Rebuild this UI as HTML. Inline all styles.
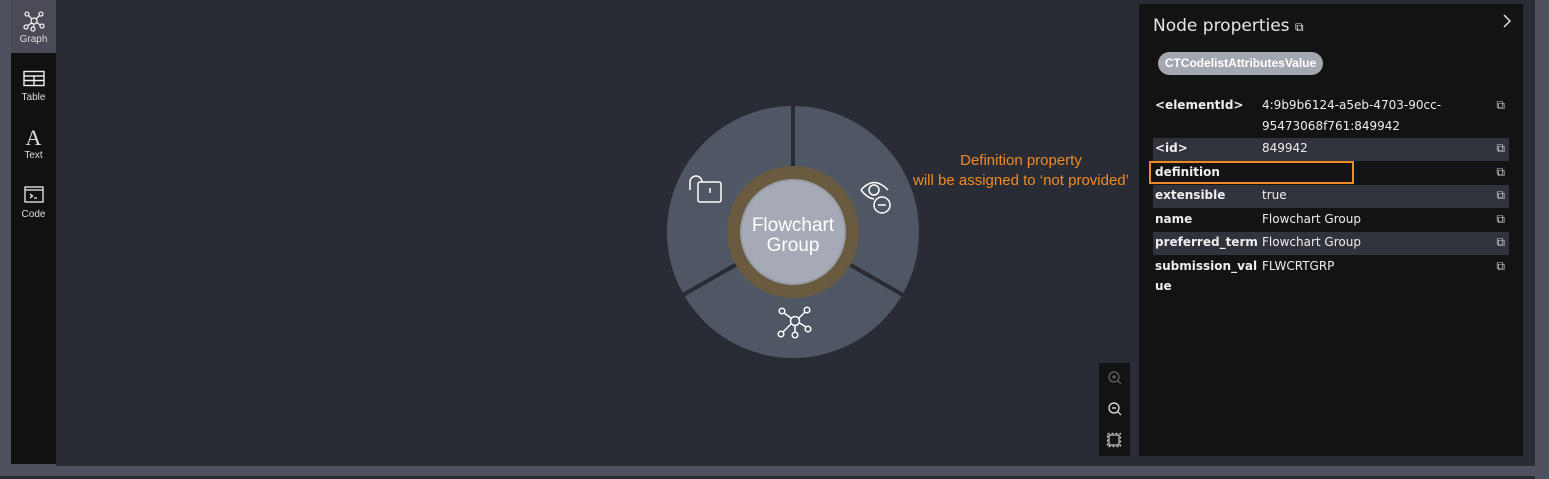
<!DOCTYPE html>
<html><head><meta charset="utf-8"><style>
body{margin:0;width:1549px;height:479px;background:#4d525e;position:relative;overflow:hidden;font-family:"Liberation Sans",sans-serif}
.side{position:absolute;left:11px;top:0;width:45px;height:464px;background:#111}
.graph{position:absolute;left:56px;top:0;width:1479px;height:466px;background:#292c34}
.bot{position:absolute;left:0;top:476px;width:1535px;height:3px;background:#292c34}
.nav{position:absolute;left:11px;width:45px;text-align:center;color:#ddd;font-size:10px}
.panel{position:absolute;left:1139px;top:4px;width:384px;height:452px;background:#131313;color:#eee;font-family:"DejaVu Sans","Liberation Sans",sans-serif}
.row{position:absolute;left:14px;width:356px;font-size:12px}
.row b{position:absolute;left:2px;font-weight:bold}
.row span{position:absolute;left:109px}
.row i{position:absolute;right:4px;top:0;font-style:normal;font-size:12px;color:#ccc}
.hl{background:#30333b}
</style></head><body>
<div class="side"></div>
<div class="nav" style="top:0;height:53px;background:#4a4b57"><svg width="22" height="22" viewBox="0 0 22 22" style="margin-top:10px" fill="none" stroke="#eee" stroke-width="1.3"><circle cx="11" cy="11" r="3"/><circle cx="4" cy="4" r="2"/><circle cx="18" cy="4" r="2"/><circle cx="3" cy="17" r="2"/><circle cx="19" cy="16" r="2"/><circle cx="10" cy="19" r="2"/><path d="M5.5 5.5L9 9M16.5 5.5L13 9M4.5 15.5L9 13M17 15L14 12.5M10.5 17L11 14"/></svg><div style="margin-top:-1px">Graph</div></div>
<div class="nav" style="top:70px"><svg width="22" height="17" viewBox="0 0 22 16" fill="none" stroke="#eee" stroke-width="1.4"><rect x="1" y="1" width="20" height="14"/><path d="M1 5.5H21M1 10H21M11 5.5V15"/></svg><div style="margin-top:2px">Table</div></div>
<div class="nav" style="top:127px"><div style="font-family:'Liberation Serif',serif;font-size:22px;line-height:22px">A</div><div style="margin-top:1px">Text</div></div>
<div class="nav" style="top:186px"><svg width="20" height="17" viewBox="0 0 20 17" fill="none" stroke="#eee" stroke-width="1.3"><rect x="1" y="1" width="18" height="15"/><path d="M1 4H19M6 8L8.5 10L6 12M10 12H13"/></svg><div style="margin-top:3px">Code</div></div>
<div class="graph"></div>
<div class="bot"></div>
<svg style="position:absolute;left:660px;top:100px" width="270" height="260" viewBox="660 100 270 260">
<circle cx="793" cy="232" r="126" fill="#4f5664"/>
<g stroke="#292c34" stroke-width="4"><path d="M793 232V104M793 232L683 295M793 232L903 295"/></g>
<circle cx="793" cy="232" r="66" fill="#6a5b40"/>
<circle cx="793" cy="232" r="52" fill="#a5aab6" stroke="#979da9" stroke-width="2"/>
<text x="793" y="231" text-anchor="middle" font-size="19" fill="#fff" font-family="Liberation Sans">Flowchart</text>
<text x="793" y="251" text-anchor="middle" font-size="19" fill="#fff" font-family="Liberation Sans">Group</text>
<g fill="none" stroke="#fff" stroke-width="1.5">
<rect x="698" y="182" width="23" height="20" rx="2"/><path d="M690 190v-8a6 6 0 0 1 12 0"/><path d="M710 188v5"/>
<path d="M861 190q13-15 27 0"/><path d="M861 190q6 8 13 9"/><circle cx="874" cy="190" r="5"/><circle cx="882" cy="205" r="8"/><path d="M878 205h8"/>
<circle cx="795" cy="321" r="4.5"/><circle cx="782" cy="311" r="2.8"/><circle cx="807" cy="310" r="2.8"/><circle cx="781" cy="334" r="2.8"/><circle cx="795" cy="335" r="2.8"/><circle cx="808" cy="329" r="2.8"/>
<path d="M784 313L791 318M805 312L799 318M783 332L791 324M795 332V325.5M806 327L799.5 323"/>
</g></svg>
<div style="position:absolute;left:880px;top:151px;width:282px;text-align:center;color:#f08a24;font-size:15px;line-height:20px">Definition property<br>will be assigned to ‘not provided’</div>
<div style="position:absolute;left:1099px;top:363px;width:31px;height:93px;background:#131313"></div>
<svg style="position:absolute;left:1106px;top:369px" width="18" height="80" fill="none" stroke-width="1.2">
<g stroke="#666"><circle cx="8" cy="8" r="5"/><path d="M12 12l3 3M6 8h4M8 6v4"/></g>
<g stroke="#eee"><circle cx="8" cy="39" r="5"/><path d="M12 43l3 3M6 39h4"/></g>
<g stroke="#ccc"><rect x="3" y="66" width="10" height="10"/><rect x="1.5" y="64.5" width="13" height="13" stroke-dasharray="2 2"/></g></svg>
<div style="position:absolute;left:1535px;top:0;width:14px;height:479px;background:#4d525e"></div>
<div class="panel">
<div style="position:absolute;left:14px;top:12px;font-size:17px;color:#e6e6e6">Node properties <span style="font-size:12px">⧉</span></div>
<svg style="position:absolute;left:363px;top:9px" width="10" height="16" fill="none" stroke="#ddd" stroke-width="1.5"><path d="M2 2l6 6-6 6"/></svg>
<div style="position:absolute;left:19px;top:48px;width:165px;height:23px;border-radius:12px;background:#a3a7b0;color:#fff;font-family:'Liberation Sans',sans-serif;font-weight:bold;font-size:12px;line-height:23px;text-align:center">CTCodelistAttributesValue</div>
<div class="row" style="top:91px;height:44px;line-height:21px"><b>&lt;elementId&gt;</b><span>4:9b9b6124-a5eb-4703-90cc-<br>95473068f761:849942</span><i>⧉</i></div>
<div class="row hl" style="top:134px;height:23px;line-height:21px"><b>&lt;id&gt;</b><span>849942</span><i>⧉</i></div>
<div class="row" style="top:158px;height:23px;line-height:21px"><b>definition</b><i>⧉</i></div>
<div style="position:absolute;left:10px;top:157px;width:201px;height:19px;border:2px solid #f08a24"></div>
<div class="row hl" style="top:181px;height:23px;line-height:21px"><b>extensible</b><span>true</span><i>⧉</i></div>
<div class="row" style="top:205px;height:23px;line-height:21px"><b>name</b><span>Flowchart Group</span><i>⧉</i></div>
<div class="row hl" style="top:228px;height:23px;line-height:21px"><b>preferred_term</b><span>Flowchart Group</span><i>⧉</i></div>
<div class="row" style="top:252px;height:40px;line-height:20px"><b>submission_val<br>ue</b><span>FLWCRTGRP</span><i>⧉</i></div>
</div>
</body></html>
